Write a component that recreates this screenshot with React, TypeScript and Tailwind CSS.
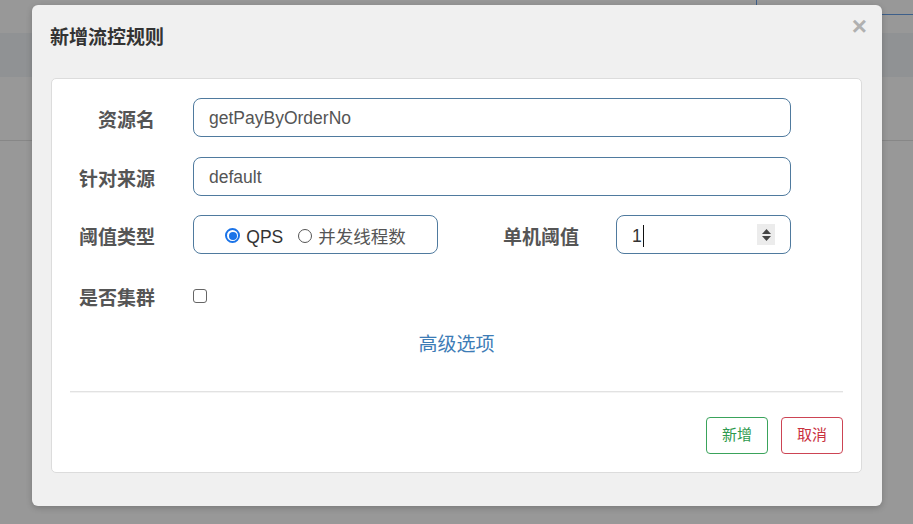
import React from "react";

const cjk = { fontFamily: '"Liberation Sans", "Noto Sans CJK SC", sans-serif' };

function Label({ children, w = "w-[85px]" }: { children: React.ReactNode; w?: string }) {
  return (
    <div className={`${w} mt-[7px] shrink-0 text-right text-[19px] font-bold text-[#555]`}>{children}</div>
  );
}

export default function App() {
  return (
    <div className="relative h-[524px] w-[913px] overflow-hidden bg-[#989898]" style={cjk}>
      {/* page behind overlay */}
      <div className="flex flex-col">
        <div className="h-[33px]" />
        <div className="h-[44px] bg-[#909294]" />
        <div className="h-[63px]" />
        <div className="h-px bg-[#878787]" />
      </div>
      <div className="absolute left-[756px] top-0 h-[15px] w-[157px] border-b border-l border-[#3d5f8a]" />

      {/* modal */}
      <div className="absolute left-[32px] top-[5px] flex h-[501px] w-[850px] flex-col rounded-[6px] bg-[#f0f0f0] shadow-[0_2px_6px_rgba(0,0,0,0.2)]">
        <div className="relative h-[73px] shrink-0 pl-[18px] pt-[20px]">
          <div className="text-[19px] font-bold leading-[26px] text-[#333]">新增流控规则</div>
          <div className="absolute right-[15px] top-[8px] text-[26px] font-bold leading-[26px] text-[#b0b0b0]">×</div>
        </div>
        <div className="ml-[19px] mr-[20px] flex h-[395px] flex-col rounded-[5px] border border-[#dcdcdc] bg-white px-[18px] pt-[19px]">
          {/* row 1 */}
          <div className="flex h-[39px] items-center">
            <Label>资源名</Label>
            <div className="ml-[38px] flex h-[39px] w-[598px] items-center rounded-[8px] border border-[#4f7a9e] px-[15px] pt-[2px] text-[17.5px] text-[#555]">
              getPayByOrderNo
            </div>
          </div>
          {/* row 2 */}
          <div className="mt-[20px] flex h-[39px] items-center">
            <Label>针对来源</Label>
            <div className="ml-[38px] flex h-[39px] w-[598px] items-center rounded-[8px] border border-[#4f7a9e] px-[15px] pt-[1px] text-[17.5px] text-[#555]">
              default
            </div>
          </div>
          {/* row 3 */}
          <div className="mt-[19px] flex h-[39px] items-center">
            <Label>阈值类型</Label>
            <div className="ml-[38px] flex h-[39px] w-[245px] items-center justify-center rounded-[8px] border border-[#4f7a9e] pt-[5px] text-[17.5px] text-[#555]">
              <span className="mb-[3px] flex h-[15px] w-[15px] items-center justify-center rounded-full border-[2px] border-[#1a73e8] bg-white">
                <span className="h-[8px] w-[8px] rounded-full bg-[#1a73e8]" />
              </span>
              <span className="ml-[6px] text-[#333]">QPS</span>
              <span className="mb-[3px] ml-[15px] h-[14px] w-[14px] rounded-full border border-[#555] bg-white" />
              <span className="ml-[6px]">并发线程数</span>
            </div>
            <Label w="w-[141px]">单机阈值</Label>
            <div className="ml-[37px] flex h-[39px] w-[175px] items-center rounded-[8px] border border-[#4f7a9e] pl-[15px] pr-[15px] text-[17.5px] text-[#333]">
              <span className="mt-[3px]">1</span>
              <span className="ml-[1px] mt-[3px] h-[22px] w-px bg-[#111]" />
              <span className="ml-auto flex h-[21px] w-[18px] flex-col items-center justify-center gap-[2px] bg-[#ececec]">
                <svg width="9" height="5" viewBox="0 0 9 5"><path d="M0 5 L4.5 0 L9 5Z" fill="#444" /></svg>
                <svg width="9" height="5" viewBox="0 0 9 5"><path d="M0 0 L4.5 5 L9 0Z" fill="#444" /></svg>
              </span>
            </div>
          </div>
          {/* row 4 */}
          <div className="mt-[21px] flex h-[42px] items-center">
            <Label>是否集群</Label>
            <span className="ml-[38px] h-[14px] w-[14px] rounded-[3px] border border-[#666] bg-white" />
          </div>
          {/* advanced */}
          <div className="mt-[15px] text-center text-[19px] leading-[26px] text-[#3d7cb6]">高级选项</div>
          <div className="mt-[33px] h-[2px] border-t border-[#e2e2e2] bg-[#f4f4f4]" />
          <div className="mt-[24px] flex justify-end gap-[13px]">
            <div className="flex h-[37px] w-[62px] items-center justify-center rounded-[4px] border border-[#3aa35b] text-[15px] text-[#2e9a4e]">
              新增
            </div>
            <div className="flex h-[37px] w-[62px] items-center justify-center rounded-[4px] border border-[#cc4454] text-[15px] text-[#c9303e]">
              取消
            </div>
          </div>
        </div>
      </div>
    </div>
  );
}
